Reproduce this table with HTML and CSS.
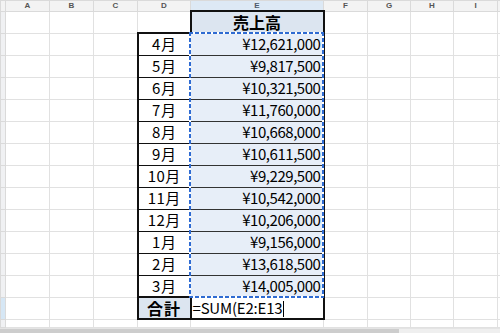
FILE: index.html
```html
<!DOCTYPE html>
<html lang="ja">
<head>
<meta charset="utf-8">
<link rel="stylesheet" href="styles.css">
</head>
<body>
<div class="sheet">
  <table class="grid">
    <colgroup>
      <col class="w-rh"><col class="w-44"><col class="w-44"><col class="w-44"><col class="w-d"><col class="w-e"><col class="w-44"><col class="w-43"><col class="w-43"><col class="w-44"><col class="w-j">
    </colgroup>
    <tr class="hdr">
      <th class="corner"></th><th>A</th><th>B</th><th>C</th><th>D</th><th class="active">E</th><th>F</th><th>G</th><th>H</th><th>I</th><th></th>
    </tr>
    <tr>
      <th class="rh"></th><td></td><td></td><td></td><td></td><td class="title">売上高</td><td></td><td></td><td></td><td></td><td></td>
    </tr>
    <tr>
      <th class="rh"></th><td></td><td></td><td></td><td class="mon first">4月</td><td class="amt first"><div class="sel"></div>¥12,621,000</td><td></td><td></td><td></td><td></td><td></td>
    </tr>
    <tr>
      <th class="rh"></th><td></td><td></td><td></td><td class="mon">5月</td><td class="amt">¥9,817,500</td><td></td><td></td><td></td><td></td><td></td>
    </tr>
    <tr>
      <th class="rh"></th><td></td><td></td><td></td><td class="mon">6月</td><td class="amt">¥10,321,500</td><td></td><td></td><td></td><td></td><td></td>
    </tr>
    <tr>
      <th class="rh"></th><td></td><td></td><td></td><td class="mon">7月</td><td class="amt">¥11,760,000</td><td></td><td></td><td></td><td></td><td></td>
    </tr>
    <tr>
      <th class="rh"></th><td></td><td></td><td></td><td class="mon">8月</td><td class="amt">¥10,668,000</td><td></td><td></td><td></td><td></td><td></td>
    </tr>
    <tr>
      <th class="rh"></th><td></td><td></td><td></td><td class="mon">9月</td><td class="amt">¥10,611,500</td><td></td><td></td><td></td><td></td><td></td>
    </tr>
    <tr>
      <th class="rh"></th><td></td><td></td><td></td><td class="mon">10月</td><td class="amt">¥9,229,500</td><td></td><td></td><td></td><td></td><td></td>
    </tr>
    <tr>
      <th class="rh"></th><td></td><td></td><td></td><td class="mon">11月</td><td class="amt">¥10,542,000</td><td></td><td></td><td></td><td></td><td></td>
    </tr>
    <tr>
      <th class="rh"></th><td></td><td></td><td></td><td class="mon">12月</td><td class="amt">¥10,206,000</td><td></td><td></td><td></td><td></td><td></td>
    </tr>
    <tr>
      <th class="rh"></th><td></td><td></td><td></td><td class="mon">1月</td><td class="amt">¥9,156,000</td><td></td><td></td><td></td><td></td><td></td>
    </tr>
    <tr>
      <th class="rh"></th><td></td><td></td><td></td><td class="mon">2月</td><td class="amt">¥13,618,500</td><td></td><td></td><td></td><td></td><td></td>
    </tr>
    <tr>
      <th class="rh"></th><td></td><td></td><td></td><td class="mon last">3月</td><td class="amt last">¥14,005,000</td><td></td><td></td><td></td><td></td><td></td>
    </tr>
    <tr>
      <th class="rh cur"></th><td></td><td></td><td></td><td class="total">合計</td><td class="formula">=SUM(E2:E13<span class="caret"></span></td><td></td><td></td><td></td><td></td><td></td>
    </tr>
    <tr class="partial">
      <th class="rh"></th><td></td><td></td><td></td><td></td><td></td><td></td><td></td><td></td><td></td><td></td>
    </tr>
  </table>
  <div class="scrollbar"><div class="thumb"></div></div>
</div>
</body>
</html>
```

FILE: styles.css
```css
html, body {
  margin: 0;
  padding: 0;
  background: #ffffff;
}
body {
  width: 500px;
  height: 333px;
  overflow: hidden;
  font-family: "Noto Sans CJK JP", "Noto Sans", sans-serif;
}
.sheet {
  display: flex;
  flex-direction: column;
  height: 333px;
}
.grid {
  border-collapse: collapse;
  table-layout: fixed;
  width: 500px;
  flex: none;
}
.w-rh { width: 5px; }
.w-44 { width: 44px; }
.w-43 { width: 43px; }
.w-d { width: 53px; }
.w-e { width: 133px; }
.w-j { width: 3px; }

.grid td, .grid th {
  border: 1px solid #e1e1e1;
  padding: 0;
  height: 22px;
  box-sizing: border-box;
  white-space: nowrap;
  overflow: visible;
  font-size: 14px;
  line-height: 20px;
  color: #000;
}
.hdr th {
  height: 10px;
  line-height: 9px;
  font-family: "Liberation Sans", Arial, sans-serif;
  font-size: 8px;
  font-weight: 700;
  color: #555;
  background: #f3f3f3;
  border-color: #dadada;
  vertical-align: top;
  overflow: hidden;
}
.hdr th.active {
  background: #dde9f5;
  color: #4d5a6a;
}
.grid th.rh {
  background: #f0f1f3;
  border-color: #dadada;
}
.grid th.rh.cur {
  background: #d6e7f5;
}
.partial td, .partial th {
  height: 8px;
}

.grid td.title {
  background: #dce5f0;
  border: 2px solid #111;
  text-align: center;
  font-weight: 700;
  font-size: 16px;
}
.grid td.mon {
  text-align: center;
  font-size: 15px;
  letter-spacing: 0.5px;
  border: 1px solid #111;
  border-left: 2px solid #111;
}
.grid td.mon.first { border-top: 2px solid #111; }
.grid td.mon.last { border-bottom: 2px solid #111; }
.grid td.amt {
  background: #e7eef8;
  text-align: right;
  padding-right: 2px;
  font-size: 15px;
  letter-spacing: -0.45px;
  border: 1px solid #333;
  border-right: 2px solid #111;
}
.grid td.amt.first {
  position: relative;
  border-top: 2px solid #111;
}
.grid td.amt.last { border-bottom: 2px solid #111; }
.sel {
  position: absolute;
  left: -2px;
  top: -2px;
  width: 135px;
  height: 266px;
  box-sizing: border-box;
  pointer-events: none;
  background:
    repeating-linear-gradient(90deg, #2f6bd2 0 4px, #ffffff 4px 6px) left top / 100% 2px no-repeat,
    repeating-linear-gradient(90deg, #2f6bd2 0 4px, #ffffff 4px 6px) left bottom / 100% 2px no-repeat,
    repeating-linear-gradient(180deg, #2f6bd2 0 4px, #ffffff 4px 6px) left top / 2px 100% no-repeat,
    repeating-linear-gradient(180deg, #2f6bd2 0 4px, #ffffff 4px 6px) right top / 2px 100% no-repeat;
}
.grid td.total {
  background: #dce5f0;
  border: 2px solid #111;
  text-align: center;
  font-weight: 700;
  font-size: 16px;
  letter-spacing: 1px;
}
.grid td.formula {
  background: #fff;
  border: 2px solid #111;
  padding-left: 1px;
  font-size: 15px;
  letter-spacing: -0.2px;
}
.caret {
  display: inline-block;
  width: 1px;
  height: 16px;
  background: #000;
  vertical-align: -3px;
  margin-left: 1px;
}
.scrollbar {
  flex: 1;
  display: flex;
  background: #efefef;
  border-top: 1px solid #e4e4e4;
}
.thumb {
  width: 399px;
  background: #cdcdcd;
}
```
